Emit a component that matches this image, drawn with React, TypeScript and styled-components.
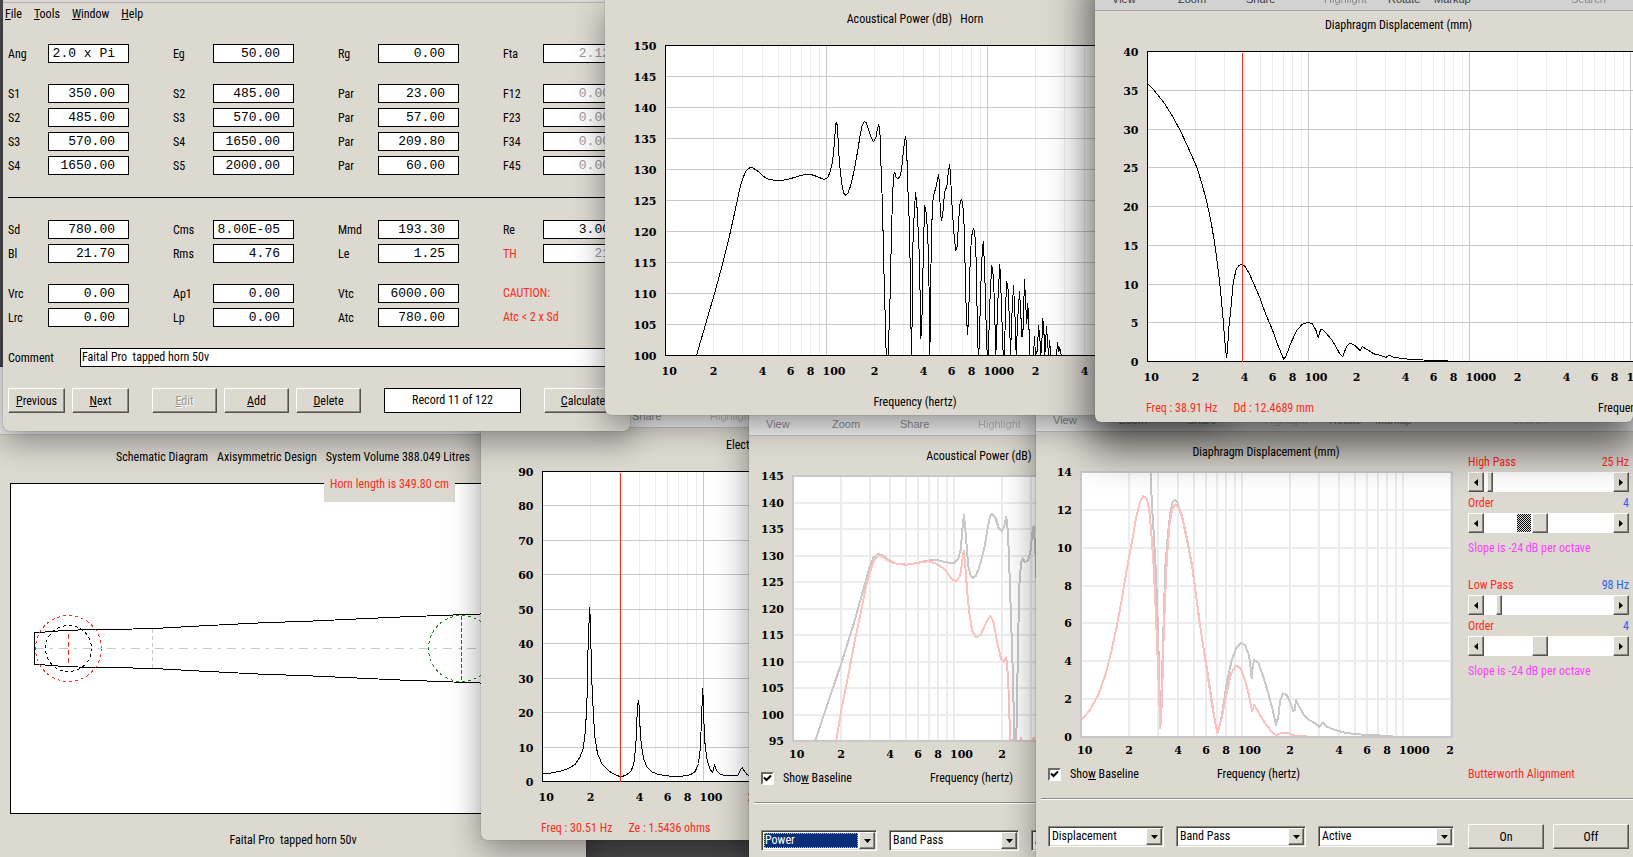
import React, { useId } from "react";
import styled, { createGlobalStyle, css } from "styled-components";

const FACE = "#dcd9d1";
const RED = "#ff2a1a";
const BLUE = "#2a62f0";
const SANS = '"Roboto Condensed", "Liberation Sans Narrow", "Arial Narrow", Roboto, sans-serif';
const MONO = '"Liberation Mono", "Courier New", monospace';

const GlobalStyle = createGlobalStyle`
  *, *::before, *::after { box-sizing: border-box; }
  body {
    margin: 0;
    background: #4c4c4e;
    color: #000;
    font-family: ${SANS};
    font-size: 12px;
    line-height: 16px;
  }
  input, select, button { font: inherit; color: inherit; margin: 0; }
`;

const bevel = css`
  background: ${FACE};
  border: 1px solid;
  border-color: #fff #55554f #55554f #fff;
  box-shadow: inset -1px -1px 0 #8a8882;
`;

/* ---------- desktop and windows ---------- */

const Desktop = styled.main`
  position: relative;
  min-height: 100vh;
  overflow: hidden;
`;

const Pane = styled.section<{
  $x: number;
  $y: number;
  $w?: number;
  $h?: number;
  $front?: boolean;
}>`
  position: absolute;
  left: ${(p) => p.$x}px;
  top: ${(p) => p.$y}px;
  ${(p) => (p.$w ? `width: ${p.$w}px;` : "right: 0;")}
  ${(p) => (p.$h ? `height: ${p.$h}px;` : "bottom: 0;")}
  display: flex;
  flex-direction: column;
  overflow: hidden;
  background: ${FACE};
  border-radius: ${(p) => (p.$h ? "0 0 6px 6px" : "0")};
  box-shadow: ${(p) =>
    p.$front
      ? "0 0 1px rgba(0,0,0,.6), 0 20px 42px 6px rgba(0,0,0,.6)"
      : "0 0 1px rgba(0,0,0,.6), 0 10px 32px rgba(0,0,0,.4)"};
`;

const Bar = styled.header<{ $h: number; $front?: boolean }>`
  flex: none;
  height: ${(p) => p.$h}px;
  display: grid;
  grid-template-columns: 66px 68px 78px 64px 46px 137px 1fr;
  align-items: end;
  padding: 0 0 4px 17px;
  font: 11px/14px "Liberation Sans", Arial, sans-serif;
  white-space: nowrap;
  color: ${(p) => (p.$front ? "#3c3c3c" : "#8c8c8c")};
  background: ${(p) => (p.$front ? "#d2d2d2" : "#f2f2f2")};
  border-bottom: 1px solid ${(p) => (p.$front ? "#a8a8a8" : "#c6c6c6")};
`;

const Faint = styled.span`
  opacity: 0.5;
`;

function Toolbar({ h = 52, front = false }: { h?: number; front?: boolean }) {
  return (
    <Bar $h={h} $front={front}>
      <span>View</span>
      <span>Zoom</span>
      <span>Share</span>
      <Faint>Highlight</Faint>
      <span>Rotate</span>
      <span>Markup</span>
      <Faint>Search</Faint>
    </Bar>
  );
}

const Body = styled.div<{ $top: number }>`
  flex: 1;
  display: flex;
  flex-direction: column;
  padding-top: ${(p) => p.$top}px;
  white-space: pre;
`;

const Title = styled.h2<{ $indent?: number }>`
  margin: 0;
  font: inherit;
  text-align: ${(p) => (p.$indent ? "left" : "center")};
  padding-left: ${(p) => p.$indent ?? 0}px;
`;

const Caption = styled.p<{ $top: number }>`
  margin: ${(p) => p.$top}px 0 0;
  text-align: center;
`;

const Readout = styled.p<{ $indent: number }>`
  margin: 16px 0 0;
  padding-left: ${(p) => p.$indent}px;
  display: flex;
  gap: 16px;
  color: ${RED};
`;

const AxisName = styled.span`
  color: #000;
  margin-left: 268px;
`;

/* ---------- logarithmic charts ---------- */

type Series = { color: string; pts: string; sx?: number };
type ChartProps = {
  label: string;
  left: number;
  width: number;
  height: number;
  max: number;
  min: number;
  step: number;
  origin: [number, number];
  series: Series[];
  marker?: number;
  soft?: boolean;
};

const DECADE = 161;

const ChartSvg = styled.svg`
  display: block;
  flex: none;
  font: bold 11px "DejaVu Serif", serif;
`;

function toPolyline(s: Series, origin: [number, number]) {
  return s.pts
    .trim()
    .split(/\s+/)
    .map((p) => {
      const [x, y] = p.split(",").map(Number);
      return `${((x - origin[0]) / (s.sx ?? 3)).toFixed(1)},${((y - origin[1]) / 3).toFixed(1)}`;
    })
    .join(" ");
}

function Chart(c: ChartProps) {
  const clip = useId();
  const top = c.soft ? 12 : 18;
  const base = c.soft ? 17 : 19;
  const lw = c.soft ? 2 : 1;
  const o = c.soft ? 0 : 0.5;
  const freqs: { x: number; n: number; d: number }[] = [];
  for (let d = 0; d < 5; d++) {
    for (let n = 1; n < 10; n++) {
      const x = Math.round(DECADE * (d + Math.log10(n)));
      if (x <= c.width + 1) freqs.push({ x, n, d });
    }
  }
  const rows: { v: number; y: number }[] = [];
  for (let v = c.max; v >= c.min; v -= c.step) {
    rows.push({ v, y: Math.round(((c.max - v) / (c.max - c.min)) * c.height) });
  }
  const minor = "#ececec";
  const major = c.soft ? minor : "#c8c8c8";
  return (
    <ChartSvg
      role="img"
      aria-label={c.label}
      width={c.left + c.width + 8}
      height={top + c.height + 23}
    >
      <clipPath id={clip}>
        <rect x={0} y={0} width={c.width} height={c.height} />
      </clipPath>
      <g transform={`translate(${c.left + o} ${top + o})`}>
        <rect width={c.width} height={c.height} fill="#fff" />
        <g shapeRendering="crispEdges" strokeWidth={lw} fill="none">
          {freqs.map((f) => (
            <line key={f.d * 10 + f.n} x1={f.x} x2={f.x} y1={0} y2={c.height} stroke={f.n === 1 ? major : minor} />
          ))}
          {rows.map((r) => (
            <line key={r.v} x1={0} x2={c.width} y1={r.y} y2={r.y} stroke={major} />
          ))}
          <g clipPath={`url(#${clip})`}>
            {c.series.map((s, i) => (
              <polyline key={i} points={toPolyline(s, c.origin)} stroke={s.color} strokeLinejoin="round" />
            ))}
          </g>
          <rect width={c.width} height={c.height} stroke={c.soft ? "#c8c8cb" : "#000"} />
          {c.marker !== undefined && (
            <line x1={c.marker} x2={c.marker} y1={1} y2={c.height} stroke={RED} />
          )}
        </g>
        {rows.map((r) => (
          <text key={r.v} x={-9} y={r.y + 4} textAnchor="end">
            {r.v}
          </text>
        ))}
        {freqs
          .filter((f) => f.n === 1 || f.n % 2 === 0)
          .map((f) => (
            <text
              key={f.d * 10 + f.n}
              x={f.n === 1 ? f.x - 4 : Math.min(f.x, c.width - 2)}
              y={c.height + base}
              textAnchor={f.n === 1 ? "start" : "middle"}
            >
              {f.n === 1 ? 10 ** (f.d + 1) : f.n}
            </text>
          ))}
      </g>
    </ChartSvg>
  );
}

const HORN = `289,1066 343,880 365,800 385,720 405,630 420,560 428,535 436,515 444,505 452,502 460,504 475,515 490,529
505,537 525,541 545,541 565,537 585,531 605,525 625,522 640,525 655,531 672,538 682,533 690,515 696,490 701,450 704,410
707,370 710,366 713,400 716,460 720,510 726,560 731,580 737,586 744,578 752,555 762,510 772,455 780,405 786,375 792,364
798,368 806,390 812,410 820,424 827,414 832,385 836,373 840,410 842,480 847,620 851,800 855,950 858,1066 864,1066
870,880 874,690 878,570 881,522 884,518 888,532 894,536 901,525 906,490 910,450 914,420 917,410 920,460 923,560 927,660
930,800 932,950 934,1066 936,950 938,740 942,640 946,578 950,610 954,690 958,780 960,900 962,1015 965,975 968,830
971,700 974,616 978,640 982,690 985,770 988,940 989,1066 991,940 993,740 996,640 999,590 1003,576 1008,560 1012,535
1016,524 1018,570 1021,640 1024,662 1028,640 1032,590 1035,570 1040,560 1044,520 1048,493 1051,520 1054,590 1058,650
1062,710 1067,751 1071,740 1075,670 1079,615 1083,598 1087,605 1091,650 1094,760 1098,930 1102,1003 1105,960 1110,780
1114,710 1120,684 1124,700 1128,780 1131,950 1134,1066 1136,1066 1139,970 1144,790 1149,725 1153,790 1157,940 1161,1066
1164,1066 1170,880 1175,797 1180,830 1184,950 1187,1066 1190,990 1194,880 1199,793 1202,860 1206,980 1209,1066
1213,1066 1216,920 1220,844 1224,870 1229,990 1231,1066 1235,950 1240,857 1244,930 1248,1066 1253,950 1258,874 1262,940
1265,1010 1268,1010 1273,838 1277,920 1280,970 1283,910 1287,1000 1289,1066 1300,1066 1303,1010 1306,1066 1312,1050
1315,976 1319,1010 1322,1066 1325,1030 1328,955 1332,1010 1334,1066 1339,980 1342,1020 1345,1066 1348,1021 1352,1066
1369,1066 1372,1027 1376,1055 1379,1042 1383,1066`;

const EXCURSION = `191,250 210,272 240,312 265,355 285,395 305,440 330,500 345,550 360,610 372,670 382,735 390,800
398,870 404,940 410,1020 415,1074 418,1050 421,990 428,920 434,850 442,810 450,797 458,793 467,799 480,822 495,858
510,895 525,940 545,990 560,1035 572,1065 577,1078 583,1070 598,1028 615,990 630,973 645,968 658,971 668,990 675,1014
682,988 690,991 712,1018 725,1040 737,1064 745,1070 755,1040 765,1030 780,1038 794,1052 800,1041 815,1050 832,1062
850,1066 867,1073 876,1066 890,1073 915,1076 945,1080 1042,1082`;

const IMPEDANCE = `217,1121 240,1119 270,1113 295,1105 315,1092 328,1073 338,1050 344,1010 348,950 351,880 353,770
356,680 359,622 362,720 365,840 369,930 374,1010 382,1060 395,1090 415,1112 440,1126 453,1130 470,1124 483,1112
491,1090 497,1040 500,960 503,910 506,900 509,970 513,1030 520,1075 530,1100 545,1115 565,1123 600,1128 630,1129
660,1124 675,1114 685,1090 691,1040 694,950 698,864 701,960 705,1040 712,1085 720,1108 728,1116 733,1093 739,1110
750,1123 770,1127 803,1126 810,1110 816,1102 822,1112 830,1122 837,1126`;

const POWER_BASE = `226,1022 306,785 345,660 370,570 388,505 400,475 414,462 425,466 445,480 470,492 500,495 530,490
560,483 590,481 620,488 642,491 655,478 662,450 667,390 672,345 676,390 680,440 685,500 692,528 699,534 708,528 720,495
733,445 744,380 750,350 757,342 765,352 775,382 786,393 793,380 799,351 804,400 808,500 814,680 820,860 822,1022
829,1022 834,740 838,560 843,490 848,476 855,488 865,480 872,450 877,400 881,380 887,470 892,600`;

const POWER_FILTERED = `289,1022 306,920 330,800 345,720 362,640 378,560 392,510 403,480 418,467 432,474 450,486
475,494 500,495 530,490 565,485 590,492 615,510 635,538 648,545 660,530 666,490 671,453 676,500 682,580 688,640 697,695
708,713 722,705 740,665 751,648 760,665 772,730 784,780 791,786 799,773 804,830 808,930 810,1022 840,1024 843,1015
846,1024 877,1024 881,1015 885,1024`;

const MOTION_BASE = `362,216 365,300 370,380 376,480 381,600 387,800 391,980 394,900 400,700 406,500 414,400 422,330
428,305 434,300 442,308 455,345 470,410 485,490 500,600 515,710 530,800 545,900 556,970 563,998 575,950 590,850 605,780
620,742 634,729 645,735 655,760 660,785 665,835 668,800 673,780 685,788 700,830 715,880 728,930 738,976 745,950 750,905
758,880 770,885 780,905 790,933 794,930 798,900 808,920 820,942 838,960 855,970 868,982 877,968 890,980 915,990 945,998
980,1003 1040,1006 1090,1009`;

const MOTION_FILTERED = `153,962 180,930 205,885 228,820 245,750 260,680 275,600 290,510 305,430 318,355 330,305
340,288 350,295 358,330 364,400 370,480 376,600 382,750 388,900 391,984 396,900 400,740 405,600 411,470 418,380 426,330
436,313 446,322 458,360 475,440 490,520 505,640 520,740 535,840 550,940 562,998 575,955 590,880 603,820 618,797 632,805
648,850 658,890 666,932 673,915 685,935 705,970 725,995 738,1006 755,998 775,1000 795,1007 830,1009`;

/* ---------- parameter form ---------- */

const FormStrip = styled.div`
  flex: none;
  height: 3px;
  background: #d8d8d8;
  border-bottom: 1px solid #b4b4b4;
`;

const Menu = styled.nav`
  display: flex;
  gap: 12px;
  padding: 3px 2px 0;
`;

const MenuItem = styled.a`
  color: inherit;
  text-decoration: none;
`;

const FormBody = styled.form`
  display: flex;
  flex-direction: column;
  gap: 21px;
  padding: 22px 8px 0 5px;
`;

const PairRow = styled.div`
  display: grid;
  grid-template-columns: repeat(4, 121px);
  column-gap: 44px;
  row-gap: 5px;
`;

const Pair = styled.div`
  display: grid;
  grid-template-columns: 40px 81px;
  align-items: center;
  height: 19px;
`;

const FieldLabel = styled.label<{ $alert?: boolean }>`
  color: ${(p) => (p.$alert ? RED : "inherit")};
`;

const Alert = styled.p`
  margin: 0;
  line-height: 19px;
  color: ${RED};
`;

const Value = styled.input<{ $dim?: boolean }>`
  width: 100%;
  height: 19px;
  padding: 0 13px 1px 1px;
  border: 1px solid #000;
  border-radius: 0;
  background: #fff;
  color: ${(p) => (p.$dim ? "#9a9a9a" : "#000")};
  font: 13px/16px ${MONO};
  text-align: right;
`;

const Rule = styled.hr`
  align-self: stretch;
  margin: 1px 0;
  border: 0;
  border-top: 1px solid #000;
`;

const CommentRow = styled.div`
  display: grid;
  grid-template-columns: 72px 1fr;
  align-items: center;
`;

const CommentInput = styled.input`
  height: 19px;
  padding: 0 1px 1px;
  border: 1px solid #000;
  background: #fff;
`;

const ButtonRow = styled.div`
  display: flex;
  gap: 7px;
`;

const PushButton = styled.button<{ $w?: number; $gap?: number }>`
  ${bevel}
  ${(p) => (p.$w ? `flex: none; width: ${p.$w}px;` : "flex: 1;")}
  margin-left: ${(p) => p.$gap ?? 0}px;
  height: 25px;
  padding: 0;
  text-align: center;

  &:disabled {
    color: #9a9892;
    text-shadow: 1px 1px 0 #fff;
  }
`;

const RecordBox = styled.output`
  flex: none;
  width: 137px;
  height: 25px;
  margin: 0 16px;
  border: 1px solid #000;
  background: #fff;
  line-height: 22px;
  text-align: center;
`;

type FieldSpec = [label: string, value: string, kind?: "dim" | "th" | "alert"];

const BLOCKS: FieldSpec[][] = [
  [["Ang", "2.0 x Pi"], ["Eg", "50.00"], ["Rg", "0.00"], ["Fta", "2.12", "dim"]],
  [
    ["S1", "350.00"], ["S2", "485.00"], ["Par", "23.00"], ["F12", "0.00", "dim"],
    ["S2", "485.00"], ["S3", "570.00"], ["Par", "57.00"], ["F23", "0.00", "dim"],
    ["S3", "570.00"], ["S4", "1650.00"], ["Par", "209.80"], ["F34", "0.00", "dim"],
    ["S4", "1650.00"], ["S5", "2000.00"], ["Par", "60.00"], ["F45", "0.00", "dim"],
  ],
  [
    ["Sd", "780.00"], ["Cms", "8.00E-05"], ["Mmd", "193.30"], ["Re", "3.00"],
    ["Bl", "21.70"], ["Rms", "4.76"], ["Le", "1.25"], ["TH", "21", "th"],
  ],
  [
    ["Vrc", "0.00"], ["Ap1", "0.00"], ["Vtc", "6000.00"], ["CAUTION:", "", "alert"],
    ["Lrc", "0.00"], ["Lp", "0.00"], ["Atc", "780.00"], ["Atc < 2 x Sd", "", "alert"],
  ],
];

function Fields({ block }: { block: number }) {
  return (
    <PairRow>
      {BLOCKS[block].map(([label, value, kind], i) => {
        const id = `f${block}-${i}`;
        if (kind === "alert") return <Alert key={id}>{label}</Alert>;
        return (
          <Pair key={id}>
            <FieldLabel htmlFor={id} $alert={kind === "th"}>
              {label}
            </FieldLabel>
            <Value id={id} defaultValue={value} $dim={kind !== undefined} />
          </Pair>
        );
      })}
    </PairRow>
  );
}

function ParameterForm() {
  return (
    <>
      <FormStrip />
      <Menu>
        <MenuItem href="#file"><u>F</u>ile</MenuItem>
        <MenuItem href="#tools"><u>T</u>ools</MenuItem>
        <MenuItem href="#window"><u>W</u>indow</MenuItem>
        <MenuItem href="#help"><u>H</u>elp</MenuItem>
      </Menu>
      <FormBody onSubmit={(e) => e.preventDefault()}>
        <Fields block={0} />
        <Fields block={1} />
        <Rule />
        <Fields block={2} />
        <Fields block={3} />
        <CommentRow>
          <label htmlFor="comment">Comment</label>
          <CommentInput id="comment" defaultValue="Faital Pro  tapped horn 50v" />
        </CommentRow>
        <ButtonRow>
          <PushButton type="button" $w={57}><u>P</u>revious</PushButton>
          <PushButton type="button" $w={57}><u>N</u>ext</PushButton>
          <PushButton type="button" $w={65} $gap={16} disabled><u>E</u>dit</PushButton>
          <PushButton type="button" $w={65}><u>A</u>dd</PushButton>
          <PushButton type="button" $w={65}><u>D</u>elete</PushButton>
          <RecordBox>Record 11 of 122</RecordBox>
          <PushButton type="button"><u>C</u>alculate</PushButton>
        </ButtonRow>
      </FormBody>
    </>
  );
}

/* ---------- schematic ---------- */

const Headings = styled(Title)`
  display: flex;
  justify-content: center;
  gap: 9px;
`;

const Canvas = styled.div`
  position: relative;
  margin: 18px 10px 0;
  height: 331px;
  border: 1px solid #000;
  background: #fff;
`;

const HornProfile = styled.svg`
  display: block;
  width: 100%;
  height: 100%;
`;

const LengthTag = styled.div`
  position: absolute;
  top: -14px;
  left: 313px;
  width: 131px;
  height: 32px;
  padding-top: 6px;
  background: ${FACE};
  color: ${RED};
  text-align: center;
`;

function Schematic() {
  return (
    <Body $top={14}>
      <Headings>
        <span>Schematic Diagram</span>
        <span>Axisymmetric Design</span>
        <span>System Volume 388.049 Litres</span>
      </Headings>
      <Canvas>
        <HornProfile role="img" aria-label="Horn profile">
          <g transform="translate(-11 -44)" fill="none" stroke="#000" shapeRendering="crispEdges">
            <path d="M35 208.5H540" stroke="#c8c8c8" strokeDasharray="9 6 3 6" />
            <path d="M152.5 189V228" stroke="#c8c8c8" strokeDasharray="4 3" />
            <path d="M34.5 192.5L45 192 58 191 78 190 133 189 163 188 199 186 258 183 313 181 400 177 480 174 560 170M34.5 192.5V224.5L45 225 58 226 78 227 133 228 163 229 199 231 258 234 313 236 400 240 480 243 560 247" />
            <circle cx="68.5" cy="208.5" r="33" stroke={RED} strokeDasharray="3 3" />
            <path d="M68.5 194V224" stroke={RED} strokeDasharray="5 3" />
            <circle cx="68.5" cy="208.5" r="23" strokeDasharray="3 3" />
            <circle cx="461.5" cy="208.5" r="33" stroke="#138a13" strokeDasharray="3 3" />
            <path d="M461.5 176V241" stroke="#138a13" strokeDasharray="4 2" />
          </g>
        </HornProfile>
        <LengthTag>Horn length is 349.80 cm</LengthTag>
      </Canvas>
      <Caption $top={18}>Faital Pro  tapped horn 50v</Caption>
    </Body>
  );
}

/* ---------- filter wizard windows ---------- */

const WizardTop = styled.div`
  display: flex;
`;

const ChartColumn = styled.div`
  flex: none;
  width: 432px;
`;

const ChartTitle = styled(Title)`
  width: 460px;
`;

const BaselineRow = styled.div`
  display: grid;
  grid-template-columns: 13px 156px auto;
  align-items: center;
  height: 16px;
  margin: 6px 0 0 12px;
`;

const Tick = styled.input`
  appearance: none;
  width: 13px;
  height: 13px;
  border: 2px solid;
  border-color: #6b6b66 #fff #fff #6b6b66;
  background: #fff;

  &:checked {
    background: #fff
      url("data:image/svg+xml,%3Csvg xmlns='http://www.w3.org/2000/svg' viewBox='0 0 9 9'%3E%3Cpath d='M1 3.5L3.5 6 8 1.5' fill='none' stroke='%23000' stroke-width='2'/%3E%3C/svg%3E")
      center / 9px 9px no-repeat;
  }
`;

const TickLabel = styled.label`
  padding-left: 9px;
`;

const Groove = styled.hr`
  flex: none;
  height: 2px;
  margin: 16px 0 26px 5px;
  border: 0;
  border-top: 1px solid #8d8b86;
  border-bottom: 1px solid #fff;
`;

const Controls = styled.div`
  display: flex;
  align-items: center;
  gap: 12px;
  height: 21px;
  padding: 0 4px 0 12px;
`;

const ButtonPair = styled.div`
  flex: 1;
  display: flex;
  gap: 9px;
  margin-left: 2px;
`;

const ComboFrame = styled.div<{ $w: number }>`
  position: relative;
  flex: none;
  display: flex;
  width: ${(p) => p.$w}px;
  height: 21px;
  padding: 1px;
  background: #fff;
  border: 1px solid;
  border-color: #8a8882 #fff #fff #8a8882;
  box-shadow: inset 1px 1px 0 #45453f, inset -1px -1px 0 ${FACE};
`;

const Combo = styled.select<{ $focused?: boolean }>`
  appearance: none;
  flex: 1;
  min-width: 0;
  margin: 1px 17px 1px 1px;
  padding: 0 1px;
  border: 0;
  outline: ${(p) => (p.$focused ? "1px dotted #d8c070" : "none")};
  outline-offset: -1px;
  background: ${(p) => (p.$focused ? "#0a2f7a" : "#fff")};
  color: ${(p) => (p.$focused ? "#fff" : "#000")};
  line-height: 15px;
`;

const ComboArrow = styled.span`
  ${bevel}
  position: absolute;
  right: 1px;
  top: 1px;
  bottom: 1px;
  width: 16px;
  display: grid;
  place-items: center;
  pointer-events: none;
`;

function DropDown({ name, value, w, focused }: { name: string; value: string; w: number; focused?: boolean }) {
  return (
    <ComboFrame $w={w}>
      <Combo aria-label={name} $focused={focused} defaultValue={value}>
        <option>{value}</option>
      </Combo>
      <ComboArrow>
        <svg width="7" height="4" aria-hidden="true">
          <path d="M0 0H7L3.5 4Z" />
        </svg>
      </ComboArrow>
    </ComboFrame>
  );
}

const Side = styled.div`
  flex: 1;
  display: flex;
  flex-direction: column;
  margin: 8px 4px 0 0;
  color: ${RED};
`;

const SideGroup = styled.div`
  display: flex;
  flex-direction: column;
  margin-bottom: 13px;
`;

const SideHead = styled.div`
  display: flex;
  justify-content: space-between;
  line-height: 20px;
  height: 20px;
`;

const Amount = styled.output<{ $alert?: boolean }>`
  color: ${(p) => (p.$alert ? RED : BLUE)};
`;

const Slope = styled.p`
  margin: 0;
  line-height: 28px;
  color: #ff40ff;
`;

const Alignment = styled.p`
  margin: 68px 0 0;
`;

const Scroll = styled.div`
  display: grid;
  grid-template-columns: 16px 1fr 16px;
  height: 20px;
  margin-bottom: 1px;
`;

const ArrowButton = styled.button`
  ${bevel}
  display: grid;
  place-items: center;
  padding: 0;
`;

const Trough = styled.div<{ $pressed?: boolean }>`
  position: relative;
  display: flex;
  background: #fff;

  &::before {
    content: "";
    display: ${(p) => (p.$pressed ? "block" : "none")};
    position: absolute;
    left: 33px;
    top: 1px;
    bottom: 1px;
    width: 14px;
    background: repeating-conic-gradient(#000 0 25%, #ddd 0 50%) 0 0 / 2px 2px;
  }
`;

const Range = styled.input<{ $thumb: number }>`
  appearance: none;
  position: relative;
  flex: 1;
  min-width: 0;
  height: 20px;
  background: transparent;

  &::-webkit-slider-thumb {
    appearance: none;
    ${bevel}
    width: ${(p) => p.$thumb}px;
    height: 20px;
  }
`;

function Slider({ id, value, thumb, pressed }: { id: string; value: number; thumb: number; pressed?: boolean }) {
  return (
    <Scroll>
      <ArrowButton type="button" aria-label="Decrease">
        <svg width="4" height="7" aria-hidden="true"><path d="M4 0V7L0 3.5Z" /></svg>
      </ArrowButton>
      <Trough $pressed={pressed}>
        <Range id={id} type="range" min={0} max={1000} defaultValue={value} $thumb={thumb} />
      </Trough>
      <ArrowButton type="button" aria-label="Increase">
        <svg width="4" height="7" aria-hidden="true"><path d="M0 0V7L4 3.5Z" /></svg>
      </ArrowButton>
    </Scroll>
  );
}

function FilterGroup({ name, freq, value, alert }: { name: string; freq: string; value: number; alert?: boolean }) {
  const id = name.split(" ")[0].toLowerCase();
  return (
    <SideGroup>
      <SideHead>
        <label htmlFor={`${id}-freq`}>{name}</label>
        <Amount $alert={alert}>{freq}</Amount>
      </SideHead>
      <Slider id={`${id}-freq`} value={value} thumb={6} />
      <SideHead>
        <label htmlFor={`${id}-order`}>Order</label>
        <Amount>4</Amount>
      </SideHead>
      <Slider id={`${id}-order`} value={425} thumb={16} pressed={alert} />
      <Slope>Slope is -24 dB per octave</Slope>
    </SideGroup>
  );
}

function Wizard({
  title,
  chart,
  mode,
  focused,
  side,
}: {
  title: string;
  chart: React.ReactNode;
  mode: string;
  focused?: boolean;
  side?: boolean;
}) {
  const id = useId();
  return (
    <Body $top={12}>
      <WizardTop>
        <ChartColumn>
          <ChartTitle>{title}</ChartTitle>
          {chart}
          <BaselineRow>
            <Tick id={id} type="checkbox" defaultChecked />
            <TickLabel htmlFor={id}>Sho<u>w</u> Baseline</TickLabel>
            <span>Frequency (hertz)</span>
          </BaselineRow>
        </ChartColumn>
        {side && (
          <Side>
            <FilterGroup name="High Pass" freq="25 Hz" value={24} alert />
            <FilterGroup name="Low Pass" freq="98 Hz" value={98} />
            <Alignment>Butterworth Alignment</Alignment>
          </Side>
        )}
      </WizardTop>
      <Groove />
      <Controls>
        <DropDown name="Chart" value={mode} w={116} focused={focused} />
        <DropDown name="Filter type" value="Band Pass" w={130} />
        <DropDown name="Filter design" value="Active" w={136} />
        {side && (
          <ButtonPair>
            <PushButton type="button">On</PushButton>
            <PushButton type="button">Off</PushButton>
          </ButtonPair>
        )}
      </Controls>
    </Body>
  );
}

export default function App() {
  return (
    <>
      <GlobalStyle />
      <Desktop>
        <Pane $x={0} $y={367} $w={586}>
          <Toolbar h={68} />
          <Schematic />
        </Pane>

        <Pane $x={481} $y={376} $w={620} $h={464}>
          <Toolbar />
          <Body $top={9}>
            <Title $indent={245}>Electrical Impedance (ohms)</Title>
            <Chart
              label="Electrical impedance"
              left={61} width={499} height={310} max={90} min={0} step={10}
              origin={[217, 214]} marker={78}
              series={[{ color: "#000", pts: IMPEDANCE }]}
            />
            <Readout $indent={60}>
              <span>Freq : 30.51 Hz</span>
              <span>Ze : 1.5436 ohms</span>
            </Readout>
          </Body>
        </Pane>

        <Pane $x={749} $y={384} $w={600}>
          <Toolbar />
          <Wizard
            title="Acoustical Power (dB)"
            mode="Power"
            focused
            chart={
              <Chart
                label="Acoustical power with band pass filter"
                left={44} width={371} height={265} max={145} min={95} step={5}
                origin={[159, 229]} soft
                series={[
                  { color: "#c8c8c8", pts: POWER_BASE },
                  { color: "#ffc0c0", pts: POWER_FILTERED },
                ]}
              />
            }
          />
        </Pane>

        <Pane $x={1036} $y={380}>
          <Toolbar />
          <Wizard
            title="Diaphragm Displacement (mm)"
            mode="Displacement"
            side
            chart={
              <Chart
                label="Diaphragm displacement with band pass filter"
                left={45} width={371} height={265} max={14} min={0} step={2}
                origin={[153, 216]} soft
                series={[
                  { color: "#c8c8c8", pts: MOTION_BASE },
                  { color: "#ffc0c0", pts: MOTION_FILTERED },
                ]}
              />
            }
          />
        </Pane>

        <Pane $x={3} $y={0} $w={627} $h={431}>
          <ParameterForm />
        </Pane>

        <Pane $x={605} $y={0} $w={620} $h={415}>
          <Body $top={11}>
            <Title>Acoustical Power (dB)   Horn</Title>
            <Chart
              label="Acoustical power"
              left={60} width={499} height={310} max={150} min={100} step={5}
              origin={[196, 136]}
              series={[{ color: "#000", pts: HORN }]}
            />
            <Caption $top={16}>Frequency (hertz)</Caption>
          </Body>
        </Pane>

        <Pane $x={1095} $y={-41} $h={463} $front>
          <Toolbar front />
          <Body $top={6}>
            <Title $indent={230}>Diaphragm Displacement (mm)</Title>
            <Chart
              label="Diaphragm displacement"
              left={52} width={982} height={310} max={40} min={0} step={5}
              origin={[191, 155]} marker={95}
              series={[{ color: "#000", pts: EXCURSION, sx: 2.835 }]}
            />
            <Readout $indent={51}>
              <span>Freq : 38.91 Hz</span>
              <span>Dd : 12.4689 mm</span>
              <AxisName>Frequency (hertz)</AxisName>
            </Readout>
          </Body>
        </Pane>
      </Desktop>
    </>
  );
}
